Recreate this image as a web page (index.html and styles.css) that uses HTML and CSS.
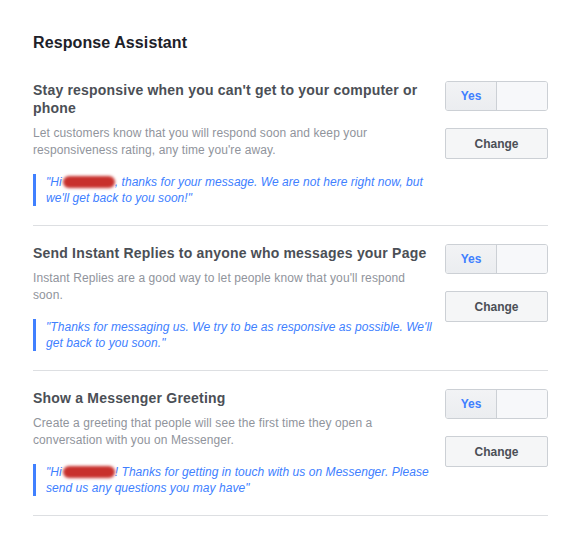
FILE: index.html
```html
<!DOCTYPE html>
<html lang="en">
<head>
    <meta charset="UTF-8">
    <meta name="viewport" content="width=device-width, initial-scale=1.0">
    <title>Response Assistant</title>
    <link rel="stylesheet" href="styles.css">
</head>
<body>
    <div class="page">
        <h1 class="title">Response Assistant</h1>

        <div class="row">
            <div class="info">
                <h2>Stay responsive when you can't get to your computer or phone</h2>
                <p class="desc">Let customers know that you will respond soon and keep your responsiveness rating, any time you're away.</p>
                <p class="quote">"Hi<span class="blur"></span>, thanks for your message. We are not here right now, but we'll get back to you soon!"</p>
            </div>
            <div class="actions">
                <div class="switch"><span class="on">Yes</span><span class="off"></span></div>
                <button class="btn">Change</button>
            </div>
        </div>

        <div class="row">
            <div class="info">
                <h2>Send Instant Replies to anyone who messages your Page</h2>
                <p class="desc">Instant Replies are a good way to let people know that you'll respond soon.</p>
                <p class="quote">"Thanks for messaging us. We try to be as responsive as possible. We'll get back to you soon."</p>
            </div>
            <div class="actions">
                <div class="switch"><span class="on">Yes</span><span class="off"></span></div>
                <button class="btn">Change</button>
            </div>
        </div>

        <div class="row">
            <div class="info">
                <h2>Show a Messenger Greeting</h2>
                <p class="desc">Create a greeting that people will see the first time they open a conversation with you on Messenger.</p>
                <p class="quote">"Hi<span class="blur"></span>! Thanks for getting in touch with us on Messenger. Please send us any questions you may have"</p>
            </div>
            <div class="actions">
                <div class="switch"><span class="on">Yes</span><span class="off"></span></div>
                <button class="btn">Change</button>
            </div>
        </div>
    </div>
</body>
</html>
```

FILE: styles.css
```css
*{
    margin: 0;
    padding: 0;
    box-sizing: border-box;
}
body{
    background: #fff;
    font-family: "Liberation Sans", Arial, sans-serif;
}
.page{
    width: 515px;
    margin-left: 33px;
    padding-top: 33px;
}
.title{
    font-size: 16px;
    line-height: 20px;
    font-weight: bold;
    letter-spacing: 0.1px;
    color: #1d2129;
    margin-bottom: 10px;
}
.row{
    display: flex;
    justify-content: space-between;
    align-items: flex-start;
    padding: 18px 0 19px;
    border-bottom: 1px solid #dddfe2;
}
.info{
    width: 404px;
}
.info h2{
    font-size: 14px;
    line-height: 18px;
    font-weight: bold;
    letter-spacing: 0.2px;
    color: #4b4f56;
}
.desc{
    margin-top: 8px;
    font-size: 12px;
    line-height: 17px;
    letter-spacing: 0.1px;
    color: #90949c;
}
.quote{
    margin-top: 15px;
    padding-left: 10px;
    border-left: 3px solid #4080ff;
    font-size: 12px;
    line-height: 16px;
    letter-spacing: 0.05px;
    font-style: italic;
    color: #4080ff;
}
.blur{
    display: inline-block;
    width: 52px;
    height: 12px;
    margin-left: 1px;
    vertical-align: -2px;
    background: #c8302c;
    border-radius: 6px;
    filter: blur(1.5px);
}
.actions{
    width: 103px;
    display: flex;
    flex-direction: column;
    gap: 17px;
}
.switch{
    display: flex;
    height: 30px;
    border: 1px solid #ccd0d5;
    border-radius: 3px;
    overflow: hidden;
}
.switch span{
    flex: 1;
    font-size: 12px;
    font-weight: bold;
    line-height: 28px;
    text-align: center;
}
.switch .on{
    color: #4080ff;
    background: linear-gradient(#f2f3f5, #ebedf0);
    border-right: 1px solid #ccd0d5;
}
.switch .off{
    background: #f7f8fa;
}
.btn{
    height: 31px;
    border: 1px solid #ccd0d5;
    border-radius: 2px;
    background: #f5f6f7;
    font-family: "Liberation Sans", Arial, sans-serif;
    font-size: 12px;
    font-weight: bold;
    color: #4b4f56;
}
```
